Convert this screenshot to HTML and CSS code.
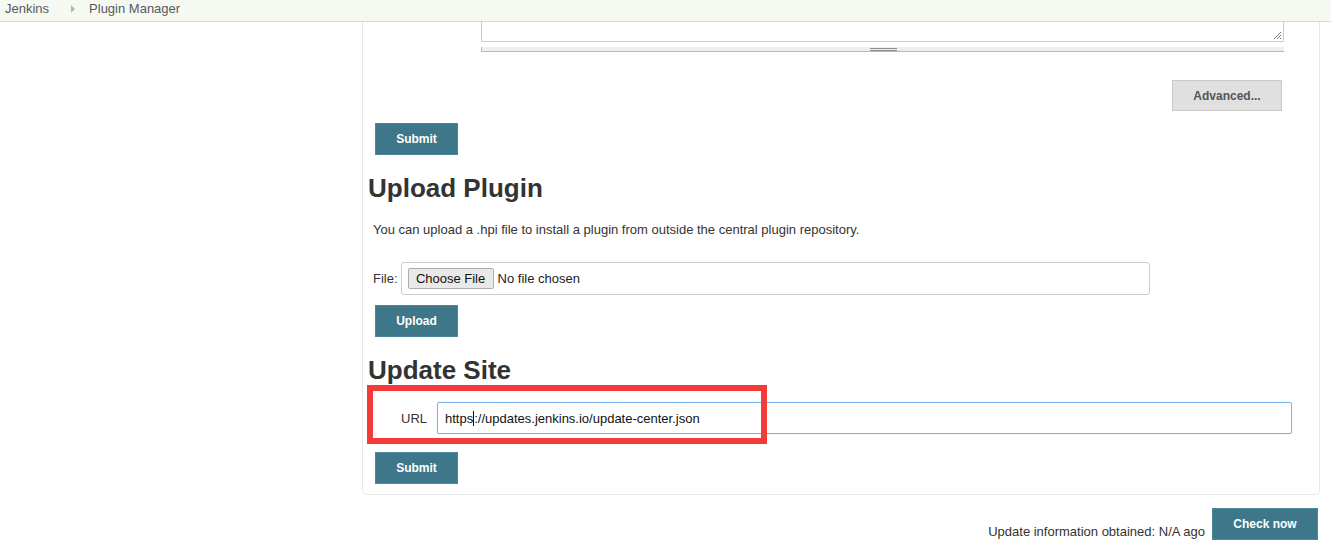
FILE: index.html
```html
<!DOCTYPE html>
<html>
<head>
<meta charset="utf-8">
<title>Plugin Manager</title>
<link rel="stylesheet" href="styles.css">
</head>
<body>
<div class="breadcrumbs">
  <span class="crumb">Jenkins</span>
  <span class="crumb-sep"></span>
  <span class="crumb">Plugin Manager</span>
</div>
<div class="main">
  <div class="side"></div>
  <div class="content">
    <div class="panel">
      <div class="textarea-wrap">
        <div class="textarea">
          <svg class="grip" width="9" height="9" viewBox="0 0 9 9"><path d="M8 1 L1 8 M8 4 L4 8 M8 7 L7 8" stroke="#777" stroke-width="1"/></svg>
        </div>
        <div class="resize-bar"><span class="thumb"></span></div>
      </div>
      <div class="adv-row"><button class="btn-adv">Advanced...</button></div>
      <div class="btn-row"><button class="btn">Submit</button></div>

      <h2 class="section-title first">Upload Plugin</h2>
      <p class="desc">You can upload a .hpi file to install a plugin from outside the central plugin repository.</p>
      <div class="file-row">
        <span class="file-label">File:</span>
        <div class="file-box">
          <span class="choose">Choose File</span>
          <span class="nofile">No file chosen</span>
        </div>
      </div>
      <div class="btn-row tight"><button class="btn">Upload</button></div>

      <h2 class="section-title">Update Site</h2>
      <div class="url-row">
        <span class="url-label">URL</span>
        <div class="url-field">https<span class="caret"></span>://updates.jenkins.io/update-center.json</div>
        <div class="highlight"></div>
      </div>
      <div class="btn-row url-submit"><button class="btn">Submit</button></div>
    </div>
    <div class="footer-row">
      <span class="update-info">Update information obtained: N/A ago</span>
      <button class="btn btn-check">Check now</button>
    </div>
  </div>
</div>
</body>
</html>
```

FILE: styles.css
```css
html, body {
  margin: 0;
  padding: 0;
  background: #fff;
  font-family: "Liberation Sans", Arial, sans-serif;
  font-size: 13px;
  color: #333;
}

.breadcrumbs {
  height: 21px;
  background: #f5f9f2;
  border-bottom: 1px solid #d5d8d2;
  display: flex;
  align-items: center;
  padding-left: 5px;
  box-sizing: content-box;
}
.crumb {
  font-size: 13px;
  color: #555a5f;
  line-height: 17px;
  margin-top: -4px;
}
.crumb-sep {
  width: 0;
  height: 0;
  border-top: 4px solid transparent;
  border-bottom: 4px solid transparent;
  border-left: 4px solid #b5b8b5;
  margin: -3px 14px 0 22px;
}

.main {
  display: flex;
}
.side {
  flex: none;
  width: 362px;
}
.content {
  flex: none;
  width: 958px;
}

.panel {
  border: 1px solid #e8e8e8;
  border-top: none;
  border-radius: 0 0 5px 5px;
  padding: 0 0 10px 0;
}

.textarea-wrap {
  margin-left: 118px;
  width: 803px;
}
.textarea {
  position: relative;
  height: 19px;
  border: 1px solid #c9c9c9;
  border-top: none;
  border-radius: 0 0 2px 2px;
}
.grip {
  position: absolute;
  right: 1px;
  bottom: 1px;
}
.resize-bar {
  margin-top: 5px;
  height: 4px;
  background: #eeeeee;
  border-bottom: 1px solid #b9b9b3;
  border-left: 1px solid #b9b9b3;
  display: flex;
  justify-content: center;
}
.thumb {
  display: block;
  width: 27px;
  height: 1px;
  margin-top: 1px;
  border-top: 1px solid #8e8e8e;
  border-bottom: 1px solid #8e8e8e;
}

.adv-row {
  display: flex;
  justify-content: flex-end;
  padding-right: 37px;
  margin-top: 28px;
}
.btn-adv {
  width: 110px;
  height: 31px;
  background: #e0e0e0;
  border: 1px solid #c9c9c9;
  color: #555;
  font-family: "Liberation Sans", Arial, sans-serif;
  font-weight: bold;
  font-size: 12px;
  padding: 0;
  cursor: pointer;
}

.btn-row {
  padding-left: 12px;
  margin-top: 12px;
  display: flex;
}
.btn-row.tight { margin-top: 10px; }
.btn-row.url-submit { margin-top: 18px; }

.btn {
  width: 83px;
  height: 32px;
  background: #3d7789;
  border: 1px solid #4a8797;
  color: #fff;
  font-family: "Liberation Sans", Arial, sans-serif;
  font-weight: bold;
  font-size: 12px;
  padding: 0;
  cursor: pointer;
}

.section-title {
  margin: 18px 0 0 5px;
  font-size: 26px;
  font-weight: bold;
  line-height: 30px;
  color: #333;
}

.desc {
  margin: 19px 0 0 10px;
  line-height: 15px;
  font-size: 13px;
}

.file-row {
  display: flex;
  align-items: center;
  margin-top: 25px;
  padding-left: 10px;
}
.file-label {
  margin-right: 3px;
}
.file-box {
  box-sizing: border-box;
  width: 749px;
  height: 33px;
  border: 1px solid #cccccc;
  border-radius: 3px;
  display: flex;
  align-items: center;
  padding-left: 6px;
}
.choose {
  display: inline-flex;
  align-items: center;
  justify-content: center;
  box-sizing: border-box;
  width: 86px;
  height: 21px;
  background: #e9e9e9;
  border: 1px solid #adadad;
  border-radius: 2px;
  color: #111;
  font-size: 13px;
}
.nofile {
  margin-left: 4px;
  color: #222;
}

.url-row {
  position: relative;
  display: flex;
  align-items: center;
  margin-top: 17px;
  padding-left: 38px;
}
.url-label {
  width: 36px;
  color: #333;
}
.url-field {
  box-sizing: border-box;
  width: 855px;
  height: 32px;
  border: 1px solid #7ab4ea;
  border-radius: 2px;
  box-shadow: 0 0 1px #9cc8f0;
  display: flex;
  align-items: center;
  padding-left: 7px;
  color: #111;
  font-size: 13px;
}
.caret {
  display: inline-block;
  width: 1px;
  height: 15px;
  background: #111;
}
.highlight {
  position: absolute;
  left: 4px;
  top: -17px;
  width: 388px;
  height: 47px;
  border: 6px solid #f53a3a;
  pointer-events: none;
}

.footer-row {
  display: flex;
  justify-content: flex-end;
  align-items: flex-end;
  margin-top: 13px;
  padding-right: 2px;
}
.update-info {
  font-size: 13px;
  color: #333;
  margin-right: 7px;
  line-height: 15px;
  margin-bottom: 1px;
}
.btn-check {
  width: 106px;
}
```
